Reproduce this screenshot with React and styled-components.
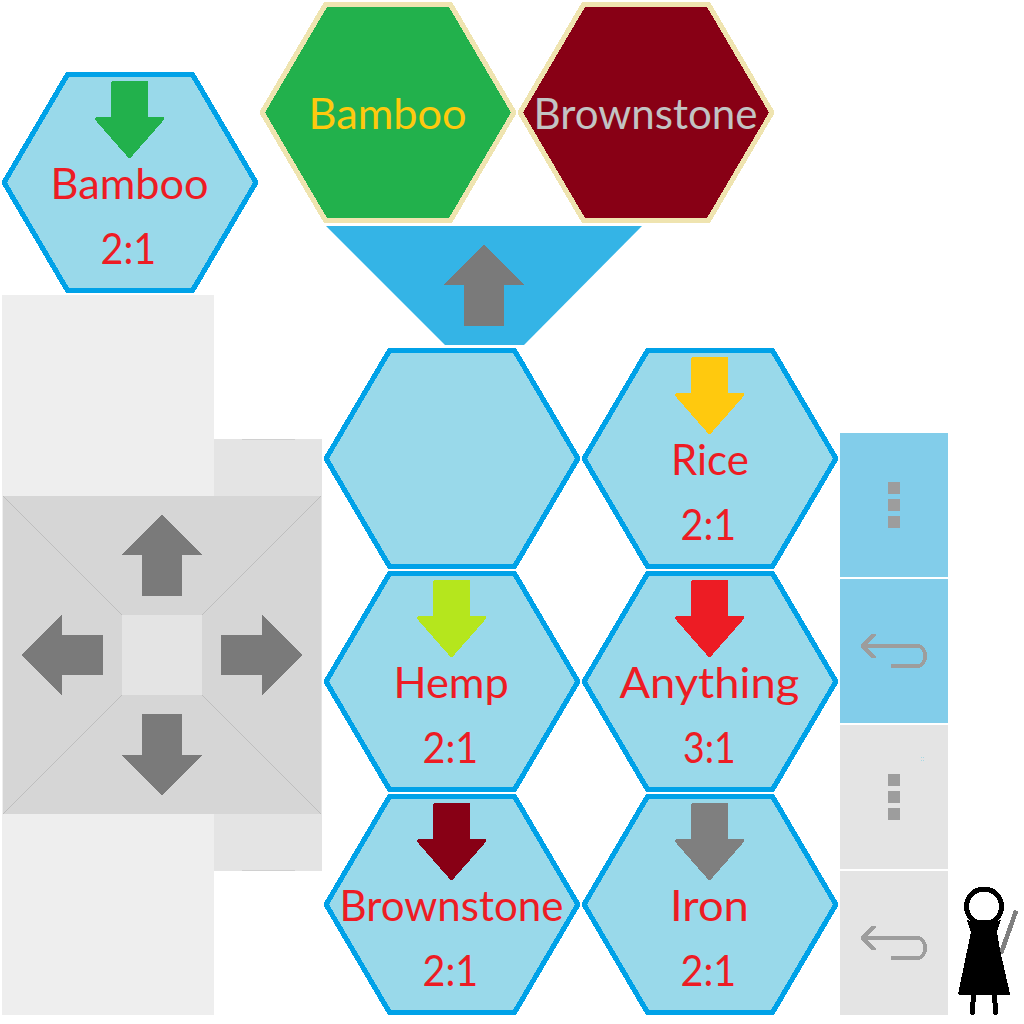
import React, { useLayoutEffect, useRef, useState } from "react";
import styled, { createGlobalStyle } from "styled-components";

const GlobalStyle = createGlobalStyle`
  body { margin: 0; background: #ffffff; }
  svg { display: block; }
`;

const Page = styled.main`
  box-sizing: border-box;
  width: 1024px;
  height: 1024px;
  padding: 2px 0 0 2px;
  display: grid;
  grid-template-columns: 258px 64px 516px 108px 1fr;
  grid-template-rows: 346px 667px;
  overflow: hidden;
  font-family: Lato, "Open Sans", sans-serif;
`;

const LeftColumn = styled.section`
  grid-column: 1 / 3;
  grid-row: 1 / 3;
  padding-top: 70px;
  display: flex;
  flex-direction: column;
  gap: 2px;
`;

const Goods = styled.section`
  grid-column: 2 / 4;
  grid-row: 1;
  display: flex;
  flex-direction: column;
  gap: 3px;
`;

const GoodsRow = styled.div`
  display: flex;
  gap: 2px;
`;

const Funnel = styled.div`
  width: 316px;
  height: 119px;
  margin-left: 66px;
  display: grid;
  place-items: center;
  background: #34b4e6;
  clip-path: polygon(0 0, 100% 0, 198px 100%, 119px 100%);
`;

const Trades = styled.section`
  grid-column: 3;
  grid-row: 2;
  display: grid;
  grid-template-columns: 256px 256px;
  grid-auto-rows: 221px;
  gap: 2px;
`;

const HexBox = styled.div`
  width: 256px;
  height: 221px;
  display: grid;
  grid-template-areas: "tile";
  > * { grid-area: tile; }
`;

const Labels = styled.div`
  box-sizing: border-box;
  padding-top: 78px;
  display: flex;
  flex-direction: column;
  align-items: center;
  color: ${(p) => p.$color};
`;

const Line = styled.span`
  height: 65px;
  line-height: 65px;
  font-size: 43px;
  white-space: nowrap;
  padding-right: ${(p) => p.$nudge || 0}px;
`;

const Stretch = styled.span`
  display: inline-block;
`;

function FitText({ width, nudge, children }) {
  const ref = useRef(null);
  const [scale, setScale] = useState(1);
  useLayoutEffect(() => {
    setScale(width / ref.current.offsetWidth);
  }, [width]);
  return (
    <Line $nudge={nudge}>
      <Stretch ref={ref} style={{ transform: `scaleX(${scale})` }}>{children}</Stretch>
    </Line>
  );
}

function Hex({ fill = "#99d9ea", edge = "#00a2e8", ink = "#ed1c24", arrow, name, width, rate }) {
  return (
    <HexBox>
      <svg width="256" height="221" shapeRendering="crispEdges">
        <polygon points="0,109 64,0 192,0 256,109 256,112 192,221 64,221 0,112" fill={edge} />
        <polygon points="5,110.500 67,5 189,5 251,110.500 189,216 67,216" fill={fill} />
        {arrow && (
          <path
            d="M111 11H144V47H160L127.5 84L95 47H111Z"
            fill={arrow}
            stroke={arrow}
            strokeWidth="4"
            strokeLinejoin="round"
          />
        )}
      </svg>
      {name && (
        <Labels $color={ink}>
          <FitText width={width} nudge={1}>{name}</FitText>
          {rate && (
            <FitText width={rate === "3:1" ? 53 : 56} nudge={rate === "3:1" ? 1 : 4}>{rate}</FitText>
          )}
        </Labels>
      )}
    </HexBox>
  );
}

const Panel = styled.div`
  width: 320px;
  height: 720px;
  display: grid;
  grid-template-columns: 212px 108px;
  grid-template-rows: 720px;
  align-items: center;
`;

const LightSlab = styled.div`
  grid-column: 1;
  grid-row: 1;
  height: 720px;
  background: #eeeeee;
`;

const MidSlab = styled.div`
  grid-column: 2;
  grid-row: 1;
  height: 432px;
  display: flex;
  flex-direction: column;
  justify-content: space-between;
  align-items: center;
  background: #e4e4e4;
`;

const Notch = styled.div`
  width: 53px;
  height: 1px;
  background: #d0d0d0;
`;

const Pad = styled.div`
  grid-column: 1 / 3;
  grid-row: 1;
  justify-self: center;
  display: grid;
  grid-template-columns: 119px 80px 119px;
  grid-template-rows: 119px 80px 119px;
  place-items: center;
  background: #d6d6d6;
`;

const PadCenter = styled.div`
  width: 80px;
  height: 80px;
  background: #e4e4e4;
`;

const arrowShapes = {
  up: [80, 81, "39.5,0 40.5,0 80,39.5 80,40 60,40 60,81 20,81 20,40 0,40 0,39.5"],
  down: [80, 81, "39.5,81 40.5,81 80,41.5 80,41 60,41 60,0 20,0 20,41 0,41 0,41.5"],
  left: [81, 80, "0,39.5 39.5,0 40,0 40,20 81,20 81,60 40,60 40,80 39.5,80 0,40.5"],
  right: [81, 80, "81,39.5 41.5,0 41,0 41,20 0,20 0,60 41,60 41,80 41.5,80 81,40.5"],
};

function Arrow({ dir }) {
  const [w, h, points] = arrowShapes[dir];
  return (
    <svg width={w} height={h} shapeRendering="crispEdges">
      <polygon points={points} fill="#7a7a7a" />
    </svg>
  );
}

function Seam({ falling }) {
  return (
    <svg width="119" height="119" shapeRendering="crispEdges">
      <path d={falling ? "M0 0L119 119" : "M0 119L119 0"} stroke="#bebebe" />
    </svg>
  );
}

const Controls = styled.nav`
  grid-column: 4;
  grid-row: 2;
  display: flex;
  flex-direction: column;
  justify-content: flex-end;
  gap: 2px;
`;

const Control = styled.div`
  position: relative;
  height: 144px;
  display: flex;
  flex-direction: column;
  align-items: center;
  justify-content: center;
  gap: 5px;
  background: ${(p) => (p.$active ? "#82cdea" : "#e4e4e4")};
`;

const Dot = styled.i`
  width: 12px;
  height: 12px;
  background: #9d9d9d;
`;

const Specks = styled.svg`
  position: absolute;
  left: 81px;
  top: 32px;
`;

function Dots() {
  return (
    <>
      <Dot />
      <Dot />
      <Dot />
    </>
  );
}

function BackIcon() {
  return (
    <svg width="66" height="34" shapeRendering="crispEdges">
      <path d="M4 12H56C61 12 64 16 64 22C64 28 61 32 56 32H30" fill="none" stroke="#9d9d9d" strokeWidth="4" />
      <path d="M0 10.500L10.500 0H15V1.500L6.500 10V14L15 22.500V24H10.500L0 13.500Z" fill="#9d9d9d" />
    </svg>
  );
}

const FigureCell = styled.div`
  grid-column: 5;
  grid-row: 2;
  align-self: end;
  padding-left: 8px;
`;

function Figure() {
  return (
    <svg width="64" height="130" shapeRendering="crispEdges">
      <path d="M45.500 67L59.500 27.500" stroke="#7f7f7f" strokeWidth="4.600" strokeLinecap="round" />
      <path d="M17.500 108L16.500 127.500M38.500 108L39.500 127.500" stroke="#000" strokeWidth="5" strokeLinecap="round" />
      <path d="M11 35L15 36L41 36L45 35L41 47L44 65L54 109L53 110H3L2 109L15 47Z" fill="#000" />
      <circle cx="28" cy="21.500" r="17.500" fill="#fff" stroke="#000" strokeWidth="5" />
      <path d="M17 35H39V40H17Z" fill="#000" />
    </svg>
  );
}

export default function App() {
  return (
    <>
      <GlobalStyle />
      <Page>
        <LeftColumn>
          <Hex arrow="#22b14c" name="Bamboo" width={158} rate="2:1" />
          <Panel>
            <LightSlab />
            <MidSlab>
              <Notch />
              <Notch />
            </MidSlab>
            <Pad>
              <Seam falling />
              <Arrow dir="up" />
              <Seam />
              <Arrow dir="left" />
              <PadCenter />
              <Arrow dir="right" />
              <Seam />
              <Arrow dir="down" />
              <Seam falling />
            </Pad>
          </Panel>
        </LeftColumn>

        <Goods>
          <GoodsRow>
            <Hex fill="#22b14c" edge="#efe4b0" ink="#ffc90e" name="Bamboo" width={158} />
            <Hex fill="#880015" edge="#efe4b0" ink="#c3c3c3" name="Brownstone" width={224} />
          </GoodsRow>
          <Funnel>
            <Arrow dir="up" />
          </Funnel>
        </Goods>

        <Trades>
          <Hex />
          <Hex arrow="#ffc90e" name="Rice" width={78} rate="2:1" />
          <Hex arrow="#b5e61d" name="Hemp" width={115} rate="2:1" />
          <Hex arrow="#ed1c24" name="Anything" width={180} rate="3:1" />
          <Hex arrow="#880015" name="Brownstone" width={224} rate="2:1" />
          <Hex arrow="#7f7f7f" name="Iron" width={79} rate="2:1" />
        </Trades>

        <Controls>
          <Control $active>
            <Dots />
          </Control>
          <Control $active>
            <BackIcon />
          </Control>
          <Control>
            <Dots />
            <Specks width="3" height="4">
              <path d="M0 0h1v1h-1zM2 0h1v1h-1zM0 3h1v1h-1zM2 3h1v1h-1z" fill="#a9d8e4" />
            </Specks>
          </Control>
          <Control>
            <BackIcon />
          </Control>
        </Controls>

        <FigureCell>
          <Figure />
        </FigureCell>
      </Page>
    </>
  );
}
